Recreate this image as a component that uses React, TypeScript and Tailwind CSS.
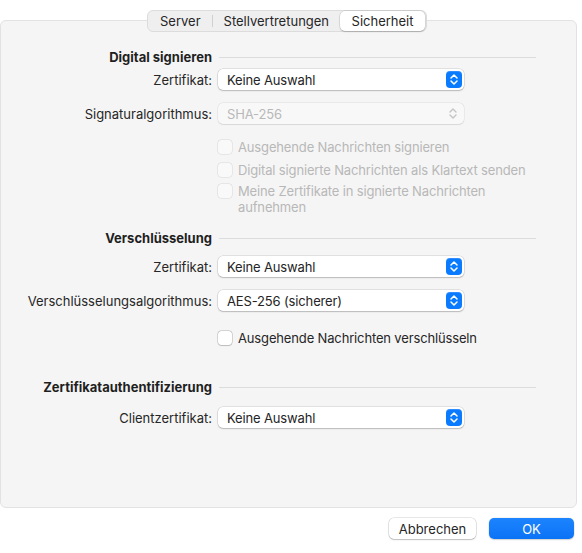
import React from "react";

const Stepper = ({ disabled = false }: { disabled?: boolean }) =>
  disabled ? (
    <svg width="16" height="17" viewBox="0 0 16 17" className="mr-[3px]">
      <path d="M5 7 L8 4 L11 7" fill="none" stroke="#c4c4c4" strokeWidth="1.4" strokeLinecap="round" strokeLinejoin="round" />
      <path d="M5 10 L8 13 L11 10" fill="none" stroke="#c4c4c4" strokeWidth="1.4" strokeLinecap="round" strokeLinejoin="round" />
    </svg>
  ) : (
    <div className="mr-[2px] flex h-[17px] w-[16px] items-center justify-center rounded-[4px] bg-[#0a7bff] shadow-[inset_0_1px_0_rgba(255,255,255,0.15)]">
      <svg width="16" height="17" viewBox="0 0 16 17">
        <path d="M5 7 L8 4 L11 7" fill="none" stroke="#ffffff" strokeWidth="1.5" strokeLinecap="round" strokeLinejoin="round" />
        <path d="M5 10 L8 13 L11 10" fill="none" stroke="#ffffff" strokeWidth="1.5" strokeLinecap="round" strokeLinejoin="round" />
      </svg>
    </div>
  );

const Popup = ({ value, disabled = false }: { value: string; disabled?: boolean }) => (
  <div
    className={
      disabled
        ? "flex h-[21px] w-[246px] items-center justify-between rounded-[5px] bg-[#f8f8f8] pl-[9px] shadow-[0_0_0_0.5px_rgba(0,0,0,0.08),0_0.5px_1px_rgba(0,0,0,0.08)]"
        : "flex h-[21px] w-[246px] items-center justify-between rounded-[5px] bg-white pl-[9px] shadow-[0_0_0_0.5px_rgba(0,0,0,0.16),0_1px_1.5px_rgba(0,0,0,0.18)]"
    }
  >
    <span className={"tracking-[-0.15px] " + (disabled ? "text-[#b8b8b8]" : "text-[#242424]")}>{value}</span>
    <Stepper disabled={disabled} />
  </div>
);

const Row = ({ label, children, className = "" }: { label: string; children: React.ReactNode; className?: string }) => (
  <div className={"flex items-center " + className}>
    <div className="w-[211px] text-right text-[#262626]">{label}</div>
    <div className="ml-[6px]">{children}</div>
  </div>
);

const Heading = ({ title, className = "" }: { title: string; className?: string }) => (
  <div className={"flex h-[16px] items-center " + className}>
    <div className="w-[211px] text-right font-bold text-[#1f1f1f]">{title}</div>
    <div className="ml-[7px] h-px w-[317px] bg-[#dcdcdc]" />
  </div>
);

const Check = ({ children, disabled = false, className = "" }: { children: React.ReactNode; disabled?: boolean; className?: string }) => (
  <div className={"flex items-start pl-[217px] " + className}>
    <div
      className={
        disabled
          ? "mt-[1px] h-[14px] w-[14px] shrink-0 rounded-[3.5px] bg-[#f9f9f9] shadow-[0_0_0_0.5px_rgba(0,0,0,0.12)]"
          : "mt-[1px] h-[14px] w-[14px] shrink-0 rounded-[3.5px] bg-white shadow-[0_0_0_0.5px_rgba(0,0,0,0.25),0_0.5px_1px_rgba(0,0,0,0.12)]"
      }
    />
    <div className={"ml-[6px] leading-[16px] tracking-[-0.15px] " + (disabled ? "text-[#b8b8b8]" : "text-[#262626]")}>{children}</div>
  </div>
);

export default function App() {
  return (
    <div
      className="relative h-[553px] w-[582px] bg-white text-[13px] leading-[16px]"
      style={{ fontFamily: "Inter, 'Noto Sans', sans-serif" }}
    >
      <div className="pt-[20px] pr-[5px]">
        <div className="h-[488px] rounded-[6px] border border-[#e2e2e2] bg-[#f5f5f5]">
          <Heading title="Digital signieren" className="mt-[28px]" />
          <Row label="Zertifikat:" className="mt-[4px]">
            <Popup value="Keine Auswahl" />
          </Row>
          <Row label="Signaturalgorithmus:" className="mt-[13px]">
            <Popup value="SHA-256" disabled />
          </Row>
          <Check disabled className="mt-[15px]">Ausgehende Nachrichten signieren</Check>
          <Check disabled className="mt-[7px]">Digital signierte Nachrichten als Klartext senden</Check>
          <Check disabled className="mt-[5px]">
            Meine Zertifikate in signierte Nachrichten
            <br />
            aufnehmen
          </Check>
          <Heading title="Verschlüsselung" className="mt-[15px]" />
          <Row label="Zertifikat:" className="mt-[10px]">
            <Popup value="Keine Auswahl" />
          </Row>
          <Row label="Verschlüsselungsalgorithmus:" className="mt-[13px]">
            <Popup value="AES-256 (sicherer)" />
          </Row>
          <Check className="mt-[19px]">Ausgehende Nachrichten verschlüsseln</Check>
          <Heading title="Zertifikatauthentifizierung" className="mt-[33px]" />
          <Row label="Clientzertifikat:" className="mt-[12px]">
            <Popup value="Keine Auswahl" />
          </Row>
        </div>
      </div>

      <div className="mt-[10px] flex justify-end gap-[13px] pr-[8px]">
        <button className="h-[21px] w-[87px] rounded-[5px] bg-white text-[#262626] shadow-[0_0_0_0.5px_rgba(0,0,0,0.18),0_1px_1.5px_rgba(0,0,0,0.18)]">
          Abbrechen
        </button>
        <button className="h-[21px] w-[85px] rounded-[5px] bg-gradient-to-b from-[#1d84ff] to-[#0a73f5] text-white shadow-[0_0_0_0.5px_rgba(0,0,0,0.08),0_1px_1.5px_rgba(0,0,0,0.15)]">
          OK
        </button>
      </div>

      <div className="absolute left-[147px] top-[10px] flex h-[22px] items-center rounded-[6px] border border-[#dcdcdc] bg-[#efefef] px-[1px] text-[#262626]">
        <div className="flex h-[20px] items-center px-[11px]">Server</div>
        <div className="h-[12px] w-px bg-[#d0d0d0]" />
        <div className="flex h-[20px] items-center px-[11px]">Stellvertretungen</div>
        <div className="flex h-[20px] w-[85px] items-center justify-center rounded-[5px] bg-white shadow-[0_0_0_0.5px_rgba(0,0,0,0.14),0_1px_1.5px_rgba(0,0,0,0.16)]">
          Sicherheit
        </div>
      </div>
    </div>
  );
}
